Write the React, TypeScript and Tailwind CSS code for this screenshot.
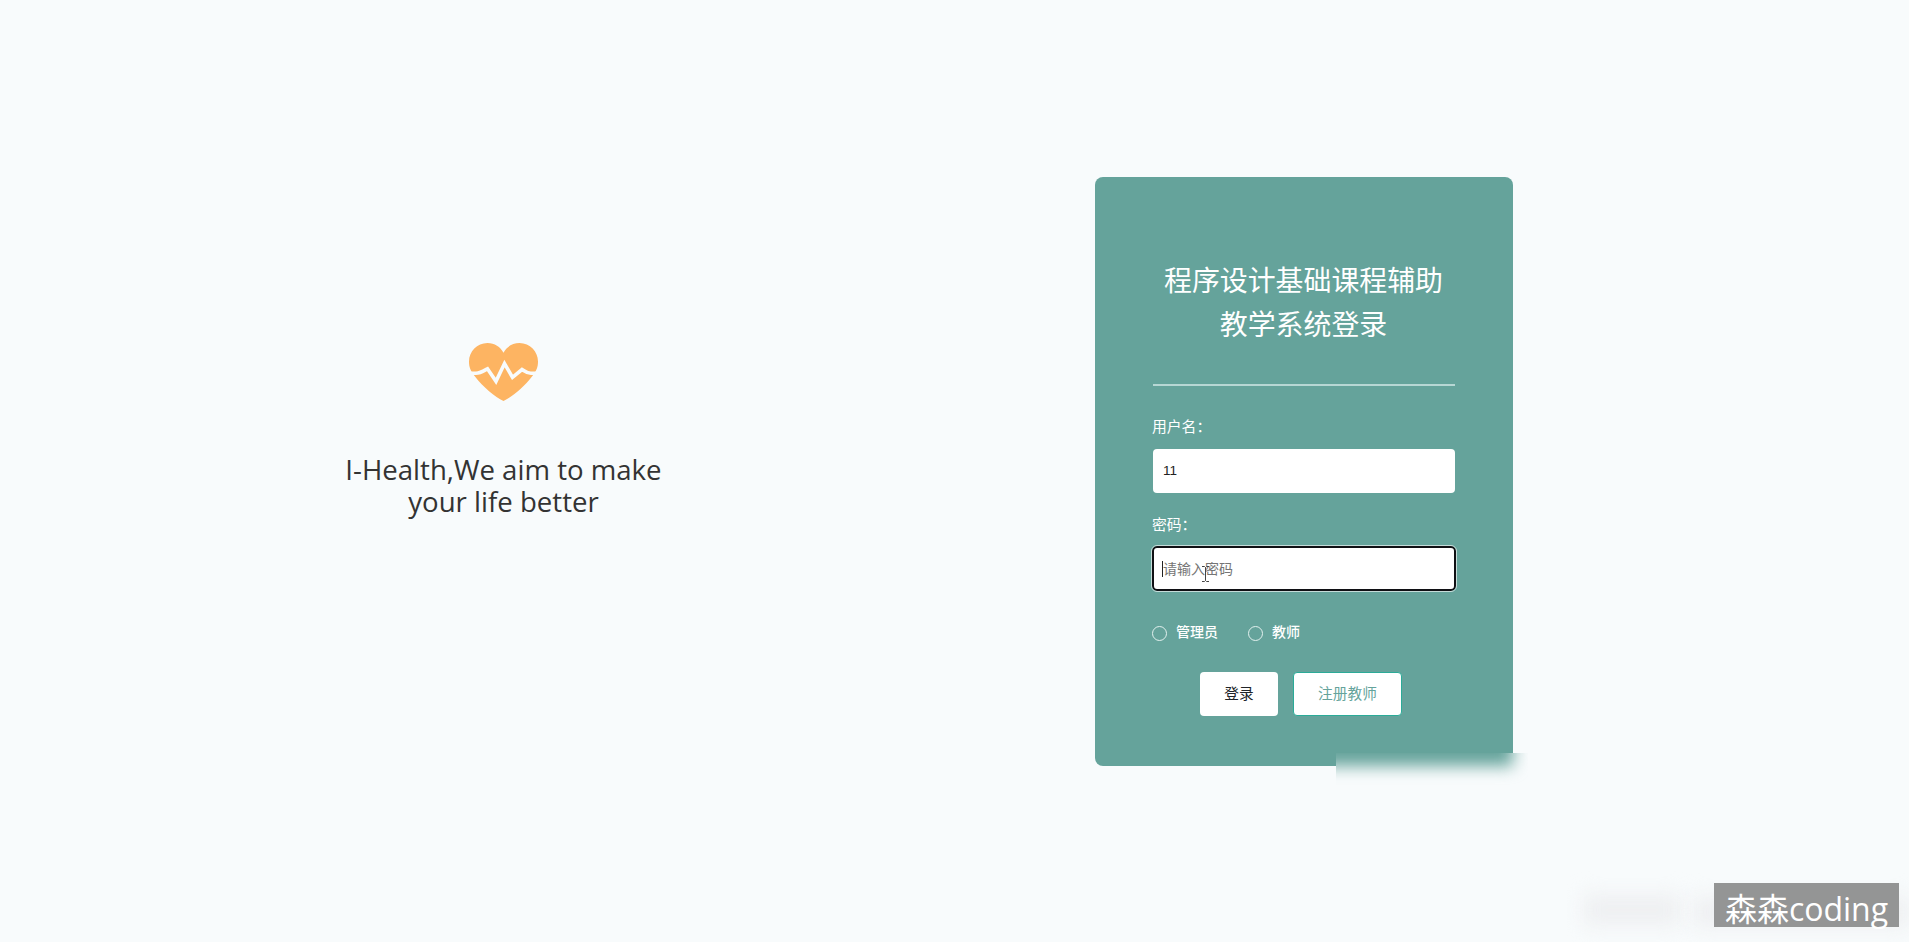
import React from "react";

const sans = "font-['Open_Sans','Noto_Sans_CJK_SC',sans-serif]";

function Heart() {
  return (
    <svg className="h-[58px] w-[69px]" viewBox="0 0 69 58" fill="none">
      <path
        d="M34.500 58C26 54 14 44 6 33.500C1.500 28 0 24 0 18.500C0 8.500 8 0 18.500 0C25.500 0 31.500 3.800 34.500 9.800C37.500 3.800 43.500 0 50.500 0C61 0 69 8.500 69 18.500C69 24 67.500 28 63 33.500C55 44 43 54 34.500 58Z"
        fill="#fdb462"
      />
      <path
        d="M0 30.300H7C11 30.300 14 28.300 18.500 25.800L27 38.300L35.500 20.500L43.500 34.300L53 26.500C56 28.500 58 30.300 62 30.300H69"
        stroke="#f8fbfc"
        strokeWidth="3.6"
        strokeMiterlimit="8"
      />
    </svg>
  );
}

function IBeam() {
  return (
    <svg className="absolute left-[47px] top-[17px] h-[18px] w-[9px]" viewBox="0 0 9 18" fill="none">
      <path d="M1 1.500H3.500L4.500 2.500L5.500 1.500H8M4.500 2.500V15.500M1 16.500H3.500L4.500 15.500L5.500 16.500H8" stroke="#444" />
    </svg>
  );
}

function Role({ label }: { label: string }) {
  return (
    <label className="flex items-center gap-[9px]">
      <span className="size-[15px] rounded-full border border-[#e3f1ef]" />
      <span className="relative -top-px text-[14px] font-medium leading-5">{label}</span>
    </label>
  );
}

export default function App() {
  return (
    <div className={`relative flex h-[942px] w-[1909px] overflow-hidden bg-[#f8fbfc] ${sans}`}>
      <section className="flex w-[1007px] flex-col items-center pt-[343px]">
        <Heart />
        <h1 className="mt-[52px] w-[330px] text-center text-[27.6px] leading-[32px] text-[#333]">
          I-Health,We aim to make your life better
        </h1>
      </section>

      <main className="ml-[88px] mt-[177px] flex h-[589px] w-[418px] flex-col rounded-lg bg-[#65a39b] pl-[57px] pr-[58px] pt-[81px] text-white">
        <h2 className="-mx-1 text-center text-[27.9px] leading-[44px]">
          程序设计基础课程辅助
          <br />
          教学系统登录
        </h2>
        <hr className="ml-px mt-[38px] h-[2px] border-0 bg-[#b7d7d4]" />

        <label className="mt-[29px] text-[14.8px] leading-[22px]">用户名：</label>
        <div className="ml-px mt-[12px] flex h-[44px] items-center rounded bg-white px-[10px] text-[#222]">
          <span className="font-['Liberation_Sans',sans-serif] text-[13.5px]">11</span>
        </div>

        <label className="mt-[20px] text-[14.8px] leading-[22px]">密码：</label>
        <div className="relative -mr-px mt-[11px] flex h-[45px] items-center rounded-[5px] border-2 border-[#101014] bg-white px-[8px] text-[14px] text-[#757575] outline outline-[#c5dcd9]">
          <span className="h-[16px] w-px bg-[#222]" />
          <span className="relative">请输入密码</span>
          <IBeam />
        </div>

        <div className="mt-[32px] flex h-5 gap-[30px]">
          <Role label="管理员" />
          <Role label="教师" />
        </div>

        <div className="mt-[29px] flex gap-[14px] pl-[48px] text-[14.7px]">
          <button className="h-[44px] w-[78px] rounded bg-white pb-px text-[#212529]">登录</button>
          <button className="ml-px h-[44px] w-[109px] rounded border border-[#2bab98] bg-white pb-px text-[#65a39b]">注册教师</button>
        </div>
      </main>

      <div className="absolute left-[1336px] top-[753px] h-[32px] w-[192px] overflow-hidden bg-[#f8fbfc]">
        <div className="absolute -left-[60px] -top-[60px] h-[73px] w-[237px] bg-[#65a39b] blur-[8px]" />
      </div>

      <div className="absolute left-[1584px] top-[895px] h-[30px] w-[96px] bg-[#eeeff1] blur-[10px]" />
      <div className="absolute left-[1694px] top-[897px] h-[30px] w-[215px] bg-[#eeeff1] blur-[10px]" />
      <div className="absolute left-[1714px] top-[883px] flex h-[44px] w-[185px] justify-center bg-[#949595] text-white">
        <span className="whitespace-nowrap text-[32px] leading-[52px]">森森coding</span>
      </div>
    </div>
  );
}
